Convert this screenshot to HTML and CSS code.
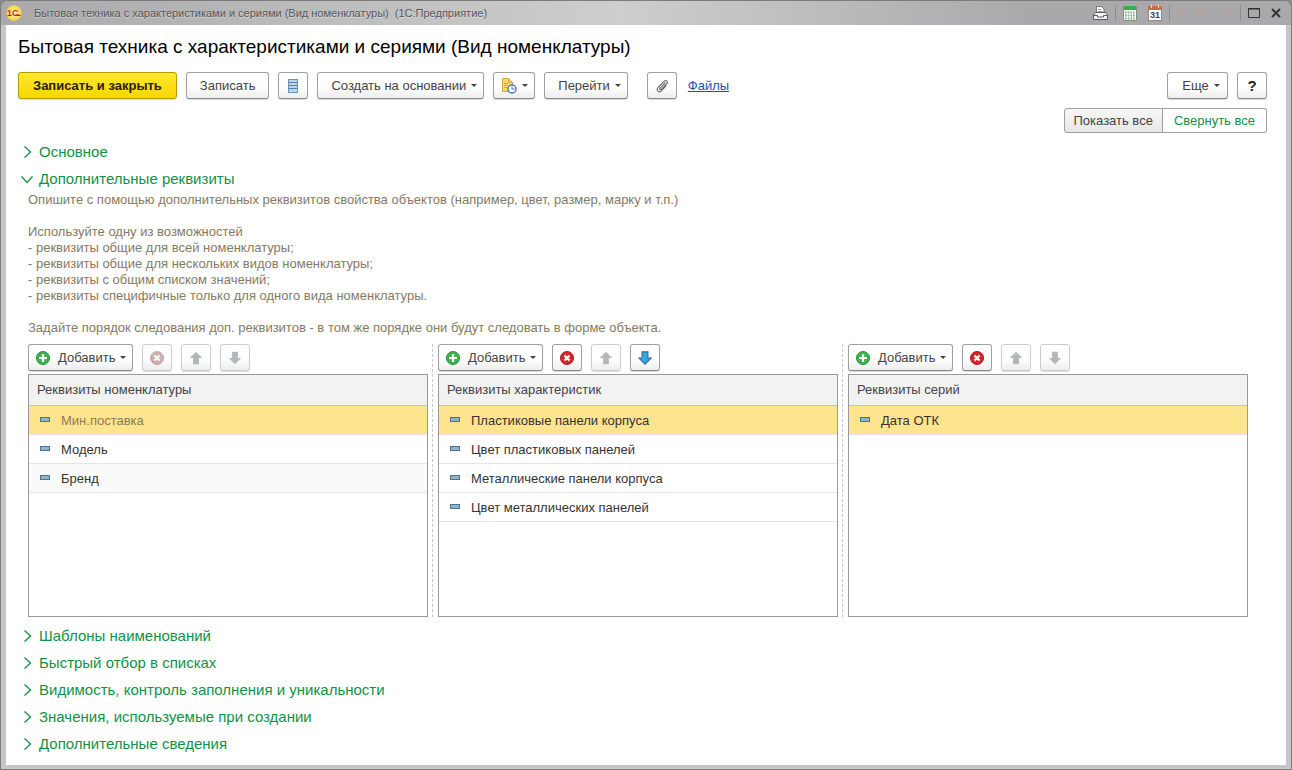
FILE: index.html
```
<!DOCTYPE html>
<html lang="ru">
<head>
    <meta charset="UTF-8">
    <meta name="viewport" content="width=device-width, initial-scale=1.0">
    <title>Бытовая техника с характеристиками и сериями (Вид номенклатуры)</title>
    <link rel="stylesheet" href="styles.css">
</head>
<body>
    <!-- shared icons -->
    <svg class="sprite" aria-hidden="true">
        <symbol id="i-add" viewBox="0 0 14 14">
            <circle cx="7" cy="7" r="6.5" fill="#3db54a" stroke="#23923a"/>
            <path d="M7 3v8M3 7h8" stroke="#fff" stroke-width="2.2"/>
        </symbol>
        <symbol id="i-del" viewBox="0 0 14 14">
            <circle cx="7" cy="7" r="6.5" fill="#d9252b" stroke="#b5161c"/>
            <path d="M4.5 4.5l5 5M9.5 4.5l-5 5" stroke="#fff" stroke-width="2.2"/>
        </symbol>
        <symbol id="i-up" viewBox="0 0 12 12">
            <path d="M6 .7L11.3 6H8.5v5.3h-5V6H.7z"/>
        </symbol>
        <symbol id="i-down" viewBox="0 0 12 12">
            <path d="M6 11.3L.7 6h2.8V.7h5V6h2.8z"/>
        </symbol>
        <symbol id="i-item" viewBox="0 0 10 5">
            <rect x=".5" y=".5" width="9" height="4" fill="#8fb3c9" stroke="#4a7396"/>
        </symbol>
        <symbol id="i-chevron" viewBox="0 0 14 14">
            <path d="M4.5 1.500l6 5.500-6 5.500" fill="none" stroke="#219653" stroke-width="1.500"/>
        </symbol>
    </svg>

    <div class="window">
        <header class="titlebar">
            <svg class="logo" width="16" height="16" viewBox="0 0 16 16">
                <defs>
                    <radialGradient id="logoFill"><stop offset=".3" stop-color="#fff3a0"/><stop offset="1" stop-color="#f7cf3a"/></radialGradient>
                </defs>
                <circle cx="8" cy="8" r="7.7" fill="url(#logoFill)"/>
                <text x="1" y="11" class="logo-text">1С</text>
                <path d="M9 10.300h5.500" stroke="#d5201e" stroke-width="1.400"/>
            </svg>
            <span class="titlebar-text">Бытовая техника с характеристиками и сериями (Вид номенклатуры)&nbsp; (1С:Предприятие)</span>
            <div class="titlebar-tools">
                <button type="button" aria-label="Печать">
                    <svg width="15" height="16" viewBox="0 0 15 16"><path d="M3.500 8V1.500h5l2.500 2.500v4" fill="#fff" stroke="#777"/><path d="M5 4.500h3M5 6.500h4.500" stroke="#999"/><path d="M.5 10l2-2.500h10l2 2.500v4.500H.5z" fill="#f4f4f4" stroke="#5c5c60"/><path d="M1 10.500h3.500v1.500h6v-1.500H14" fill="none" stroke="#5c5c60"/></svg>
                </button>
                <i class="sep"></i>
                <button type="button" aria-label="Калькулятор">
                    <svg width="14" height="16" viewBox="0 0 14 16"><path d="M.5 1.500h13v14H.5z" fill="#fff" stroke="#7d927f"/><path d="M1 1h12v4H1z" fill="#35b04b"/><path d="M2 7.500h10M2 10.500h10M2 13.500h10" stroke="#7fa887" stroke-width="2" stroke-dasharray="1.600 1.100"/></svg>
                </button>
                <button type="button" aria-label="Календарь">
                    <svg width="14" height="16" viewBox="0 0 14 16"><path d="M.5 1.500h13v14H.5z" fill="#fff" stroke="#8b8b93"/><path d="M0 1h14v4H0z" fill="#c4713f"/><path d="M3.500 0v3M10.500 0v3" stroke="#f3e3d8"/><text x="7" y="13" text-anchor="middle" class="cal-day">31</text></svg>
                </button>
                <i class="sep"></i>
                <button type="button" class="mem">M</button>
                <button type="button" class="mem">M+</button>
                <button type="button" class="mem">M-</button>
                <i class="sep"></i>
                <button type="button" aria-label="Развернуть">
                    <svg width="12" height="12" viewBox="0 0 12 12"><path d="M.5 1.500h11v9H.5zM0 2h12" fill="none" stroke="#333"/></svg>
                </button>
                <button type="button" aria-label="Закрыть">
                    <svg width="10" height="10" viewBox="0 0 10 10"><path d="M1 1l8 8M9 1L1 9" stroke="#333" stroke-width="2"/></svg>
                </button>
            </div>
        </header>

        <main class="form">
            <h1>Бытовая техника с характеристиками и сериями (Вид номенклатуры)</h1>

            <div class="toolbar">
                <button type="button" class="btn primary">Записать и закрыть</button>
                <button type="button" class="btn">Записать</button>
                <button type="button" class="btn icon-btn" aria-label="Список">
                    <svg width="10" height="14" viewBox="0 0 10 14"><rect x=".5" y=".5" width="9" height="13" fill="#b9d6ea" stroke="#6a93b3"/><path d="M1 3.500h8M1 6.500h8M1 9.500h8" stroke="#5684a8"/></svg>
                </button>
                <button type="button" class="btn drop">Создать на основании</button>
                <button type="button" class="btn drop reminder" aria-label="Напоминание">
                    <svg width="16" height="16" viewBox="0 0 16 16"><path d="M1.500.5h6l4 4v9h-10z" fill="#f8d775" stroke="#d9a93a"/><path d="M7.500.5v4h4M3 5.500h4M3 7.500h4M3 9.500h3" fill="none" stroke="#d9a93a"/><circle cx="11" cy="11" r="4" fill="#fff" stroke="#4b7bb0" stroke-width="1.400"/><path d="M11 8.500V11h2.500" fill="none" stroke="#4b7bb0"/></svg>
                </button>
                <button type="button" class="btn drop">Перейти</button>
                <button type="button" class="btn icon-btn clip" aria-label="Присоединенные файлы">
                    <svg width="14" height="14" viewBox="0 0 14 14"><path d="M10.500 3.500L5 9.200c-.8 1 .5 2 1.300 1.200l5.500-5.700c1.700-2-.7-4.200-2.500-2.500L3 8.700c-2.300 2.600 1 5.500 3.300 3.200l5-5.200" fill="none" stroke="#6b6b6b" stroke-width="1.100"/></svg>
                </button>
                <a href="#" class="files">Файлы</a>
                <div class="toolbar-right">
                    <button type="button" class="btn drop more">Еще</button>
                    <button type="button" class="btn icon-btn help">?</button>
                </div>
            </div>

            <div class="switch">
                <button type="button" id="expandAll">Показать все</button>
                <button type="button" id="collapseAll" class="active">Свернуть все</button>
            </div>

            <details>
                <summary><svg><use href="#i-chevron"/></svg>Основное</summary>
            </details>
            <details open>
                <summary><svg><use href="#i-chevron"/></svg>Дополнительные реквизиты</summary>
                <div class="section-body">
                    <div class="hint">
                        <p>Опишите с помощью дополнительных реквизитов свойства объектов (например, цвет, размер, марку и т.п.)</p>
                        <p>Используйте одну из возможностей<br>
                        - реквизиты общие для всей номенклатуры;<br>
                        - реквизиты общие для нескольких видов номенклатуры;<br>
                        - реквизиты с общим списком значений;<br>
                        - реквизиты специфичные только для одного вида номенклатуры.</p>
                        <p>Задайте порядок следования доп. реквизитов - в том же порядке они будут следовать в форме объекта.</p>
                    </div>

                    <div class="panels">
                        <section class="panel">
                            <div class="panel-bar">
                                <button type="button" class="btn drop add"><svg><use href="#i-add"/></svg>Добавить</button>
                                <button type="button" class="btn icon-btn" aria-label="Удалить" disabled><svg class="del"><use href="#i-del"/></svg></button>
                                <button type="button" class="btn icon-btn" aria-label="Вверх" disabled><svg class="arrow"><use href="#i-up"/></svg></button>
                                <button type="button" class="btn icon-btn" aria-label="Вниз" disabled><svg class="arrow"><use href="#i-down"/></svg></button>
                            </div>
                            <div class="list">
                                <table>
                                    <thead><tr><th>Реквизиты номенклатуры</th></tr></thead>
                                    <tbody>
                                        <tr class="selected muted"><td><svg><use href="#i-item"/></svg>Мин.поставка</td></tr>
                                        <tr><td><svg><use href="#i-item"/></svg>Модель</td></tr>
                                        <tr class="alt"><td><svg><use href="#i-item"/></svg>Бренд</td></tr>
                                    </tbody>
                                </table>
                            </div>
                        </section>
                        <div class="splitter"></div>
                        <section class="panel">
                            <div class="panel-bar">
                                <button type="button" class="btn drop add"><svg><use href="#i-add"/></svg>Добавить</button>
                                <button type="button" class="btn icon-btn" aria-label="Удалить"><svg class="del"><use href="#i-del"/></svg></button>
                                <button type="button" class="btn icon-btn" aria-label="Вверх" disabled><svg class="arrow"><use href="#i-up"/></svg></button>
                                <button type="button" class="btn icon-btn" aria-label="Вниз"><svg class="arrow"><use href="#i-down"/></svg></button>
                            </div>
                            <div class="list">
                                <table>
                                    <thead><tr><th>Реквизиты характеристик</th></tr></thead>
                                    <tbody>
                                        <tr class="selected"><td><svg><use href="#i-item"/></svg>Пластиковые панели корпуса</td></tr>
                                        <tr><td><svg><use href="#i-item"/></svg>Цвет пластиковых панелей</td></tr>
                                        <tr><td><svg><use href="#i-item"/></svg>Металлические панели корпуса</td></tr>
                                        <tr><td><svg><use href="#i-item"/></svg>Цвет металлических панелей</td></tr>
                                    </tbody>
                                </table>
                            </div>
                        </section>
                        <div class="splitter"></div>
                        <section class="panel">
                            <div class="panel-bar">
                                <button type="button" class="btn drop add"><svg><use href="#i-add"/></svg>Добавить</button>
                                <button type="button" class="btn icon-btn" aria-label="Удалить"><svg class="del"><use href="#i-del"/></svg></button>
                                <button type="button" class="btn icon-btn" aria-label="Вверх" disabled><svg class="arrow"><use href="#i-up"/></svg></button>
                                <button type="button" class="btn icon-btn" aria-label="Вниз" disabled><svg class="arrow"><use href="#i-down"/></svg></button>
                            </div>
                            <div class="list">
                                <table>
                                    <thead><tr><th>Реквизиты серий</th></tr></thead>
                                    <tbody>
                                        <tr class="selected"><td><svg><use href="#i-item"/></svg>Дата ОТК</td></tr>
                                    </tbody>
                                </table>
                            </div>
                        </section>
                    </div>
                </div>
            </details>
            <details>
                <summary><svg><use href="#i-chevron"/></svg>Шаблоны наименований</summary>
            </details>
            <details>
                <summary><svg><use href="#i-chevron"/></svg>Быстрый отбор в списках</summary>
            </details>
            <details>
                <summary><svg><use href="#i-chevron"/></svg>Видимость, контроль заполнения и уникальности</summary>
            </details>
            <details>
                <summary><svg><use href="#i-chevron"/></svg>Значения, используемые при создании</summary>
            </details>
            <details>
                <summary><svg><use href="#i-chevron"/></svg>Дополнительные сведения</summary>
            </details>
        </main>
    </div>

    <script>
        function toggleAll(open) {
            document.querySelectorAll('details').forEach(item => {
                item.open = open;
            });
            document.getElementById('expandAll').classList.toggle('active', open);
            document.getElementById('collapseAll').classList.toggle('active', !open);
        }

        document.getElementById('expandAll').addEventListener('click', () => toggleAll(true));
        document.getElementById('collapseAll').addEventListener('click', () => toggleAll(false));
    </script>
</body>
</html>
```
FILE: styles.css
```
* {
    box-sizing: border-box;
}
body {
    margin: 0;
    background: #8a8a8a;
    font-family: "Liberation Sans", Arial, sans-serif;
    font-size: 13px;
    color: #444;
}
button {
    font: inherit;
    color: inherit;
    cursor: pointer;
}
.sprite {
    display: none;
}

/* window frame */
.window {
    display: flex;
    flex-direction: column;
    min-height: 100vh;
    padding: 0 5px 4px;
    border: 1px solid #7b7b7d;
    border-radius: 8px 8px 0 0;
    background: #c6c6c6;
}
.titlebar {
    display: flex;
    align-items: center;
    height: 24px;
    margin: 0 -5px;
    padding: 0 10px 0 5px;
    border-radius: 7px 7px 0 0;
    background: linear-gradient(90deg, #a9a9ab, #cecece 48%, #a9a9ab 80%);
}
.logo-text {
    font-size: 9px;
    font-weight: bold;
    fill: #d5201e;
}
.titlebar-text {
    margin-left: 12px;
    font-size: 11px;
    color: #555;
    text-shadow: 0 1px 1px rgba(255, 255, 255, 0.5);
}
.titlebar-tools {
    display: flex;
    align-items: center;
    gap: 11px;
    margin-left: auto;
}
.titlebar-tools button {
    display: flex;
    padding: 0;
    border: none;
    background: none;
}
.titlebar-tools .mem {
    font-size: 10px;
    color: #b8a196;
}
.sep {
    width: 1px;
    height: 16px;
    margin: 0 -4px;
    background: #8c8c8e;
}
.cal-day {
    font-size: 9px;
    font-weight: bold;
    fill: #444;
}

/* form */
.form {
    flex: 1;
    padding: 11px 19px 8px 12px;
    background: #fff;
}
h1 {
    margin: 0 0 14px;
    font-size: 19px;
    font-weight: normal;
    line-height: 22px;
    color: #000;
}
.toolbar {
    display: flex;
    align-items: center;
    gap: 9px;
}
.toolbar-right {
    display: flex;
    gap: 9px;
    margin-left: auto;
}
.btn {
    display: flex;
    align-items: center;
    justify-content: center;
    height: 27px;
    padding: 0 13px;
    border: 1px solid #a0a0a0;
    border-bottom-color: #888;
    border-radius: 3px;
    background: linear-gradient(#fff 50%, #eee);
    white-space: nowrap;
    box-shadow: 0 1px 1px rgba(0, 0, 0, 0.15);
}
.btn:disabled {
    border-color: #cdcdcd;
    cursor: default;
}
.btn.primary {
    padding: 0 14px;
    border-color: #b49b00;
    background: linear-gradient(#ffe82e, #f7d600);
    font-weight: bold;
    color: #2b2000;
}
.btn.icon-btn {
    width: 30px;
    padding: 0;
}
.btn.drop {
    padding-right: 6px;
}
.drop::after {
    content: "";
    margin-left: 5px;
    border: 3px solid transparent;
    border-top-color: #444;
    border-bottom: none;
}
.btn.reminder {
    padding-left: 7px;
}
.btn.more {
    width: 61px;
}
.clip {
    margin-left: 10px;
}
.help {
    font-size: 15px;
    font-weight: bold;
    color: #222;
}
.files {
    margin-left: 2px;
    color: #1c55ae;
}

.switch {
    display: flex;
    justify-content: flex-end;
    margin: 9px 0 5px;
}
.switch button {
    height: 25px;
    padding: 0 9px;
    border: 1px solid #a0a0a0;
    border-radius: 3px 0 0 3px;
    background: linear-gradient(#f8f8f8, #e6e6e6);
}
.switch button + button {
    padding: 0 11px;
    border-left: none;
    border-radius: 0 3px 3px 0;
}
.switch .active {
    background: #fff;
    color: #119245;
}

/* collapsible groups */
summary {
    display: flex;
    align-items: center;
    height: 27px;
    font-size: 15px;
    color: #119245;
    list-style: none;
    cursor: pointer;
}
summary svg {
    width: 14px;
    height: 14px;
    margin: 0 5px 0 2px;
}
details[open] summary svg {
    transform: rotate(90deg);
}
.section-body {
    padding: 0 19px 5px 10px;
}
.hint {
    line-height: 16px;
    color: #857a62;
}
.hint p {
    margin: 0 0 16px;
}
.hint p:last-child {
    margin-bottom: 8px;
}

/* attribute lists */
.panels {
    display: flex;
}
.panel {
    flex: 1;
    min-width: 0;
}
.splitter {
    margin: 0 5px 0 4px;
    border-left: 1px dashed #c8c8c8;
}
.panel-bar {
    display: flex;
    gap: 9px;
    margin-bottom: 3px;
}
.btn.add {
    padding-left: 7px;
}
.add svg {
    width: 14px;
    height: 14px;
    margin-right: 8px;
}
.del {
    width: 14px;
    height: 14px;
}
.arrow {
    width: 14px;
    height: 14px;
    fill: #35a8e8;
    stroke: #2272a8;
}
:disabled .del {
    opacity: 0.4;
    filter: saturate(0.4);
}
:disabled .arrow {
    fill: #b0b8be;
    stroke: none;
}
.list {
    min-height: 243px;
    border: 1px solid #999;
}
table {
    width: 100%;
    border-collapse: separate;
    border-spacing: 0;
}
th {
    height: 31px;
    padding: 0 8px 2px;
    border-bottom: 1px solid #c4c4c4;
    background: #f2f2f2;
    font-weight: normal;
    text-align: left;
}
td {
    height: 29px;
    padding: 0 11px;
    border-bottom: 1px solid #e4e4e4;
    color: #333;
}
td svg {
    width: 10px;
    height: 5px;
    margin-right: 11px;
    vertical-align: 3px;
}
.alt td {
    background: #fafafa;
}
.selected td {
    background: #ffe48f;
}
.muted td {
    color: #8c7b5a;
}
```
